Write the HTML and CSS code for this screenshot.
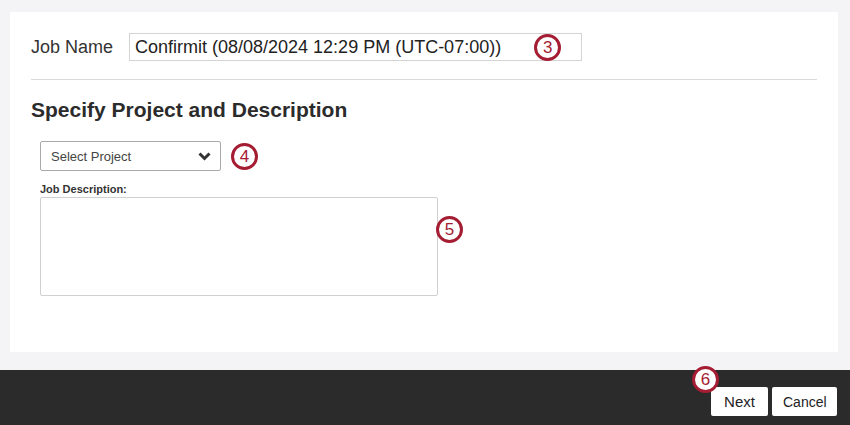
FILE: index.html
```html
<!DOCTYPE html>
<html lang="en">
<head>
  <meta charset="UTF-8">
  <title>Confirmit Job</title>
  <link rel="stylesheet" href="styles.css">
</head>
<body>
  <div class="card">
    <div class="job-row">
      <label class="job-label" for="jobName">Job Name</label>
      <div class="job-input">
        <span>Confirmit (08/08/2024 12:29 PM (UTC-07:00))</span>
        <span class="step step-3">3</span>
      </div>
    </div>

    <h2 class="section-title">Specify Project and Description</h2>

    <div class="project">
      <div class="select-row">
        <div class="select">
          <span>Select Project</span>
          <svg class="chevron" width="13" height="9" viewBox="0 0 13 9">
            <path d="M1.5 1.5 L6.5 6.5 L11.5 1.5" fill="none" stroke="#333" stroke-width="3"/>
          </svg>
        </div>
        <span class="step">4</span>
      </div>

      <div class="desc-label">Job Description:</div>
      <div class="desc-row">
        <div class="textarea"></div>
        <span class="step step-5">5</span>
      </div>
    </div>
  </div>

  <div class="footer">
    <span class="step step-6">6</span>
    <button class="btn">Next</button>
    <button class="btn">Cancel</button>
  </div>
</body>
</html>
```

FILE: styles.css
```css
* {
  box-sizing: border-box;
  margin: 0;
  padding: 0;
}

body {
  font-family: "Liberation Sans", Arial, sans-serif;
  background: #f4f4f6;
  color: #2b2b2b;
  width: 850px;
  height: 425px;
  overflow: hidden;
}

/* Karta */
.card {
  background: #fff;
  margin: 12px 12px 0 10px;
  height: 340px;
  padding: 21px 21px 0 21px;
}

.job-row {
  display: flex;
  align-items: center;
  padding-bottom: 18px;
  border-bottom: 1px solid #d9d9d9;
}

.job-label {
  font-size: 18px;
  width: 98px;
  color: #333;
}

.job-input {
  display: flex;
  align-items: center;
  width: 453px;
  height: 28px;
  border: 1px solid #d4d4d4;
  padding: 0 0 0 5px;
  font-size: 18px;
  color: #222;
}

.step {
  display: inline-flex;
  align-items: center;
  justify-content: center;
  width: 27px;
  height: 27px;
  border: 3px solid #a51d33;
  border-radius: 50%;
  background: #fff;
  color: #a51d33;
  font-size: 17px;
  line-height: 1;
}

.step-3 {
  margin-left: 33px;
}

.section-title {
  font-size: 21px;
  font-weight: bold;
  color: #2b2b2b;
  margin-top: 18px;
  line-height: 24px;
}

.project {
  padding-left: 9px;
  margin-top: 19px;
}

.select-row {
  display: flex;
  align-items: center;
  gap: 10px;
}

.select {
  display: flex;
  align-items: center;
  justify-content: space-between;
  width: 181px;
  height: 30px;
  border: 1px solid #a9a9a9;
  border-radius: 2px;
  padding: 0 9px 0 10px;
  font-size: 13px;
  color: #444;
}

.desc-label {
  font-size: 11px;
  font-weight: bold;
  color: #333;
  margin-top: 12px;
}

.desc-row {
  display: flex;
  align-items: flex-start;
  margin-top: 2px;
}

.textarea {
  width: 398px;
  height: 99px;
  border: 1px solid #d0d0d0;
  border-radius: 2px;
}

.step-5 {
  margin-left: -2px;
  margin-top: 19px;
}

/* Stopka */
.footer {
  position: relative;
  margin-top: 18px;
  height: 55px;
  background: #2b2b2b;
  display: flex;
  justify-content: flex-end;
  align-items: flex-start;
  gap: 4px;
  padding: 17px 13px 0 0;
}

.btn {
  background: #fff;
  border: none;
  border-radius: 2px;
  height: 29px;
  padding: 0 11px;
  font-family: "Liberation Sans", Arial, sans-serif;
  font-size: 15px;
  color: #222;
}

.btn:first-of-type {
  width: 57px;
}

.btn:last-of-type {
  width: 65px;
  font-size: 14px;
}

.step-6 {
  position: absolute;
  left: 692px;
  top: -4px;
}
```
